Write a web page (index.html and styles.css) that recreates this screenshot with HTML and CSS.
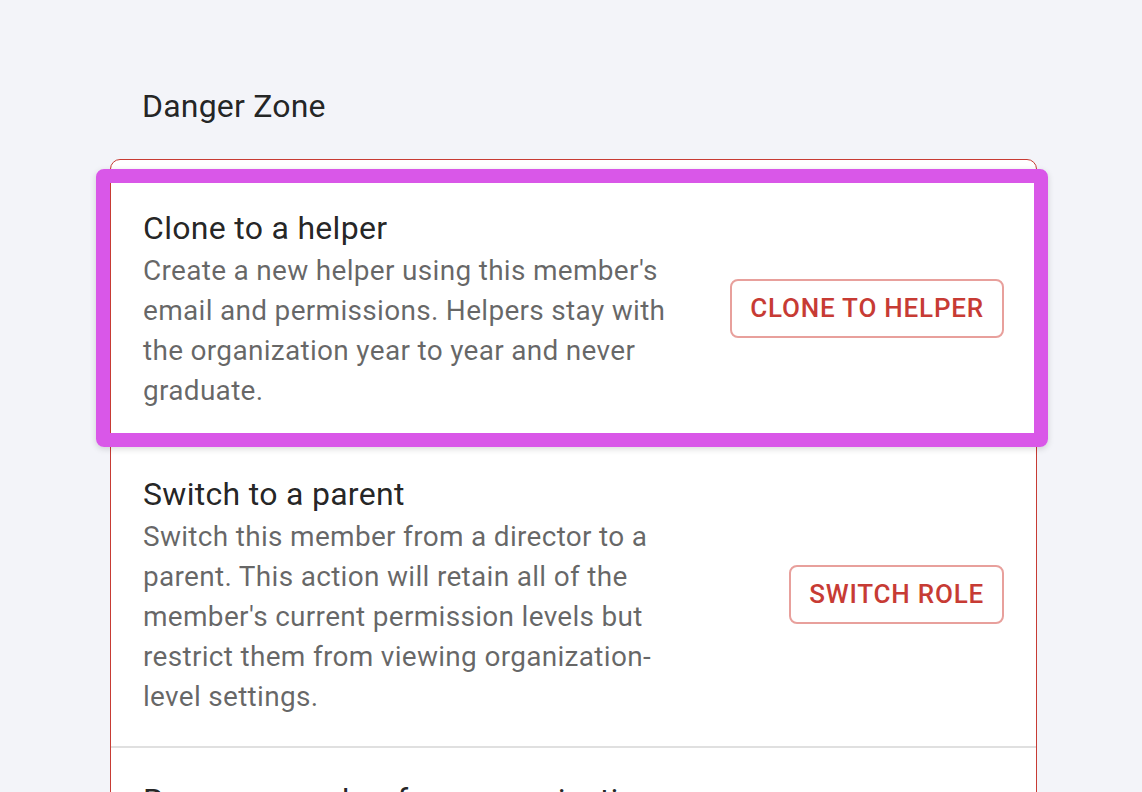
FILE: index.html
```html
<!DOCTYPE html>
<html lang="en">
<head>
<meta charset="utf-8">
<title>Danger Zone</title>
<link rel="stylesheet" href="styles.css">
</head>
<body>
<main class="page">
  <h2 class="heading">Danger Zone</h2>
  <section class="card">
    <ul class="list">
      <li class="row">
        <div class="text">
          <div class="title">Clone to a helper</div>
          <div class="desc">Create a new helper using this member's email and permissions. Helpers stay with the organization year to year and never graduate.</div>
        </div>
        <button class="btn">Clone to helper</button>
      </li>
      <li class="row">
        <div class="text">
          <div class="title">Switch to a parent</div>
          <div class="desc">Switch this member from a director to a parent. This action will retain all of the member's current permission levels but restrict them from viewing organization-level settings.</div>
        </div>
        <button class="btn">Switch role</button>
      </li>
      <li class="row">
        <div class="text">
          <div class="title">Remove member from organization</div>
          <div class="desc">Remove this member from the organization. They will lose access to all organization data.</div>
        </div>
        <button class="btn">Remove</button>
      </li>
    </ul>
    <div class="highlight"></div>
  </section>
</main>
</body>
</html>
```

FILE: styles.css
```css
html, body {
  margin: 0;
  padding: 0;
  background: #f3f4f9;
  font-family: Roboto, "Noto Sans", Arial, sans-serif;
  overflow: hidden;
  height: 792px;
}

.page {
  padding: 84px 0 0 110px;
  width: 927px;
}

.heading {
  margin: 0 0 31px 32px;
  font-size: 32px;
  line-height: 44px;
  font-weight: 400;
  letter-spacing: 0.2px;
  color: rgba(0, 0, 0, 0.87);
}

.card {
  position: relative;
  background: #fff;
  border: 1px solid #c73b34;
  border-radius: 10px;
}

.list {
  list-style: none;
  margin: 0;
  padding: 16px 0 0;
}

.row {
  display: flex;
  align-items: center;
  justify-content: space-between;
  padding: 29px 32px;
  border-bottom: 2px solid #e0e0e0;
}

.text {
  width: 540px;
}

.title {
  font-size: 32px;
  line-height: 46px;
  letter-spacing: 0.3px;
  color: rgba(0, 0, 0, 0.87);
}

.desc {
  font-size: 28px;
  line-height: 40px;
  color: rgba(0, 0, 0, 0.6);
  letter-spacing: 0.3px;
}

.btn {
  flex: none;
  height: 59px;
  padding: 0 18px;
  background: #fff;
  border: 2px solid #e8a09c;
  border-radius: 8px;
  color: #c73b34;
  font-family: inherit;
  font-size: 26px;
  font-weight: 500;
  letter-spacing: 0.8px;
  text-transform: uppercase;
}

.highlight {
  position: absolute;
  left: -15px;
  top: 9px;
  width: 952px;
  height: 278px;
  box-sizing: border-box;
  border: 14px solid #d957e8;
  border-radius: 8px;
  box-shadow: 0 2px 6px rgba(0, 0, 0, 0.15);
  pointer-events: none;
}
```
